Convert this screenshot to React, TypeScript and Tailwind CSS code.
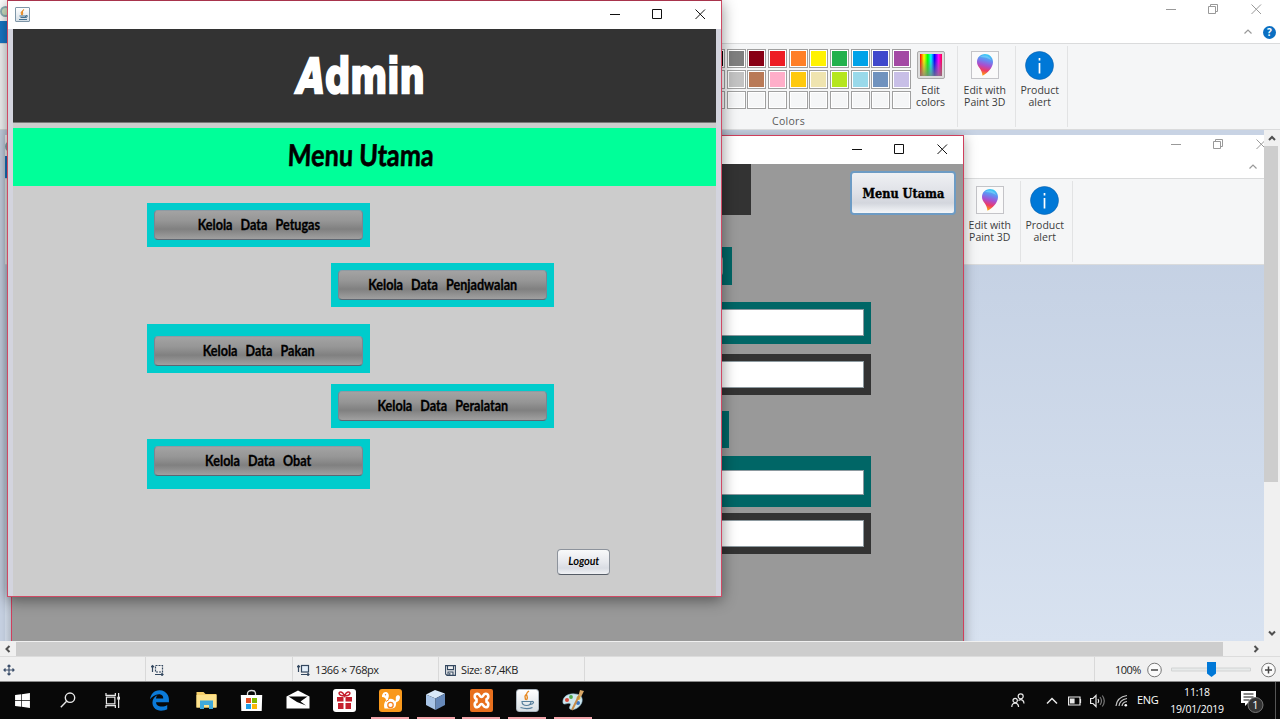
import React from "react";
import { FaEdgeLegacy, FaWindows } from "react-icons/fa";
import { SiXampp } from "react-icons/si";

const ui = "font-['Open_Sans','Noto_Sans',sans-serif]";

const topColors = ["bg-[#000]", "bg-[#7f7f7f]", "bg-[#880015]", "bg-[#ed1c24]", "bg-[#ff7f27]", "bg-[#fff200]", "bg-[#22b14c]", "bg-[#00a2e8]", "bg-[#3f48cc]", "bg-[#a349a4]"];
const lowColors = ["bg-[#fff]", "bg-[#c3c3c3]", "bg-[#b97a57]", "bg-[#ffaec9]", "bg-[#ffc90e]", "bg-[#efe4b0]", "bg-[#b5e61d]", "bg-[#99d9ea]", "bg-[#7092be]", "bg-[#c8bfe7]"];
const emptyColors = Array<string>(10).fill("bg-[#f5f6f7]");

function Swatches() {
  return (
    <div className="flex flex-col gap-[2px] pt-[5px]">
      {[topColors, lowColors, emptyColors].map((row, r) => (
        <div key={r} className="flex gap-[1.7px]">
          {row.map((c, i) => (
            <div key={i} className="h-[18.8px] w-[19px] border border-[#a0a0a0] bg-white p-px">
              <div className={`size-full ${c}`} />
            </div>
          ))}
        </div>
      ))}
    </div>
  );
}

function WinButtons({ color, thin }: { color: string; thin?: boolean }) {
  return (
    <svg width="108" height="16" viewBox="0 0 108 16" fill="none" stroke={color} strokeWidth="1">
      <path d="M6 8.500h10" />
      {thin ? <path d="M48.500 5.500h7v7h-7zM50.500 5.500v-2h7v7h-2" /> : <path d="M48.500 3.500h9v9h-9z" />}
      <path d="M91.500 3.500l9.500 9.500M101 3.500L91.500 13" />
    </svg>
  );
}

function Drop() {
  return (
    <div className="grid size-[28px] place-items-center border border-[#c4c4c8] bg-[#fafafa]">
      <svg width="18" height="24" viewBox="0 0 18 24">
        <defs>
          <linearGradient id="drop" x1="0.6" y1="0" x2="0.4" y2="1">
            <stop offset="0" stopColor="#35d0f5" />
            <stop offset=".3" stopColor="#6a86f0" />
            <stop offset=".52" stopColor="#a94fcf" />
            <stop offset=".75" stopColor="#ee3b66" />
            <stop offset="1" stopColor="#ffb000" />
          </linearGradient>
        </defs>
        <path d="M9 1C4 1 1 4.700 1 9c0 5 5 6.500 5.500 13.800C11 20.500 17 15 17 9c0-4.500-3.500-8-8-8z" fill="url(#drop)" />
        <path d="M4 4c4-3 10-1 11 3-3-2-7-3-11-3z" fill="#7fe0ff" opacity=".5" />
      </svg>
    </div>
  );
}

function Tool({ icon, a, b, w }: { icon: React.ReactNode; a: string; b: string; w: string }) {
  return (
    <div className={`flex h-[81px] flex-col items-center border-r border-[#e2e3e4] pt-[5px] ${w}`}>
      <div className="h-[33px]">{icon}</div>
      <div className="whitespace-nowrap text-center text-[10.5px] leading-[12px] text-[#3c3c3c]">
        {a}
        <br />
        {b}
      </div>
    </div>
  );
}

function PaintTop({ help }: { help?: boolean }) {
  return (
    <div className={`flex h-[130px] w-[1280px] shrink-0 flex-col bg-white ${ui}`}>
      <div className="flex h-[21px] items-start justify-between pr-[12px]">
        <div className="mt-[6px] size-[11px] rounded-full border-2 border-[#8fb2b8] bg-[#cfe4c4]" />
        <div className="pt-[1px]">
          <WinButtons color="#999" thin />
        </div>
      </div>
      <div className="flex h-[22px] items-center justify-between pr-[4px]">
        <div className="h-full w-[60px] bg-[#1979ca]" />
        <div className="flex items-center gap-[10px]">
          <svg width="10" height="8" viewBox="0 0 10 8" fill="none" stroke="#999" strokeWidth="1.200">
            <path d="M1.500 5.500L5 2l3.500 3.500" />
          </svg>
          <div className="grid size-[13px] place-items-center">
            {help && <div className="grid size-[13px] place-items-center rounded-full bg-[#0b6fc2] text-[10px] font-bold leading-none text-white">?</div>}
          </div>
        </div>
      </div>
      <div className="flex h-[87px] items-start border-y border-[#dadbdc] bg-[#f5f6f7]">
        <div className="mt-[2px] flex h-[81px] w-[958px] justify-end border-r border-[#e2e3e4] pr-[7px]">
          <div className="-mt-[2px] flex w-[205px] flex-col">
            <Swatches />
            <div className="mr-[40px] mt-[6px] text-center text-[10.5px] leading-[12px] tracking-[0.300px] text-[#5a5a5a]">Colors</div>
          </div>
          <div className="flex w-[39px] flex-col items-center pt-[5px]">
            <div className="size-[28px] rounded-[2px] border border-[#aaa] bg-[#ddd] p-[2px]">
              <div className="size-full bg-[linear-gradient(to_bottom,transparent_20%,#808080cc),linear-gradient(to_right,#f00,#ff0_18%,#0f0_35%,#0ff_50%,#00f_66%,#f0f_84%,#f04)]" />
            </div>
            <div className="mt-[5px] text-center text-[10.5px] leading-[12px] tracking-[-0.100px] text-[#3c3c3c]">
              Edit
              <br />
              colors
            </div>
          </div>
        </div>
        <div className="mt-[2px] flex">
          <Tool w="w-[57.500px] pr-[3px]" icon={<Drop />} a="Edit with" b="Paint 3D" />
          <Tool
            w="w-[52.500px] pr-[3px]"
            a="Product"
            b="alert"
            icon={
              <svg width="29" height="29" viewBox="0 0 29 29">
                <circle cx="14.500" cy="14.500" r="14" fill="#0078d7" stroke="#0c62ac" strokeWidth=".6" />
                <path d="M14.500 12v10.500M14.500 7v2.500" stroke="#fff" strokeWidth="1.700" />
              </svg>
            }
          />
        </div>
      </div>
    </div>
  );
}

function JavaIcon() {
  return (
    <div className="-mt-px grid size-[15px] place-items-center rounded-[1px] border border-[#7f96a8] bg-linear-to-b from-white to-[#d5dee6]">
      <svg width="12" height="12" viewBox="0 0 12 12" fill="none">
        <path d="M7 0.500C3 3 7.500 3.500 5 6M5 2.500C3 4 5 4.500 4.500 6" stroke="#e78a22" strokeWidth="1.100" />
        <path d="M2.500 7h6v1.500h-5M9 6.500c2-.5 1.500 2-1 2M2 10.500h8" stroke="#45708f" strokeWidth="1.100" />
      </svg>
    </div>
  );
}

function Field({ outer, inner }: { outer: string; inner: string }) {
  return (
    <div className={`w-[859px] pr-[7px] ${outer}`}>
      <div className={`border border-[#8d9aa0] bg-white ${inner}`} />
    </div>
  );
}

function BackWindow() {
  return (
    <div className="absolute left-[11px] top-[5px] flex h-[520px] w-[953px] flex-col border border-[#cf3f5c] bg-[#999] shadow-[0_2px_12px_rgba(0,0,0,0.35)]">
      <div className="flex h-[28px] shrink-0 items-center justify-end bg-white pb-[2px] pr-[9px]">
        <WinButtons color="#111" />
      </div>
      <div className="flex h-[83px] shrink-0 items-start justify-between pr-[7px]">
        <div className="h-[51px] w-[739px] bg-[#333]" />
        <div className="mt-[7px] grid h-[44px] w-[106px] place-items-center rounded-[4px] border-2 border-[#6d9bc4] bg-[linear-gradient(#eff0f3,#dfe1e7_50%,#d3d6dd_75%,#f4f6f9)] pt-[2px]">
          <span className="inline-block scale-x-[0.940] whitespace-nowrap font-['DejaVu_Serif',serif] text-[12px] font-bold text-black [-webkit-text-stroke:0.400px_black]">Menu Utama</span>
        </div>
      </div>
      <div className="h-[38px] w-[720px] shrink-0 bg-[#006666] py-[9px] pr-[9px]">
        <div className="h-full rounded bg-[#999]" />
      </div>
      <Field outer="mt-[17px] h-[42px] shrink-0 bg-[#006666] pt-[7px]" inner="h-[27px]" />
      <Field outer="mt-[10px] h-[41px] shrink-0 bg-[#333] pt-[7px]" inner="h-[27px]" />
      <div className="mt-[16px] h-[37px] w-[717px] shrink-0 bg-[#006666]" />
      <Field outer="mt-[8px] h-[51px] shrink-0 bg-[#006666] pt-[14px]" inner="h-[25px]" />
      <Field outer="mt-[6px] h-[41px] shrink-0 bg-[#333] pt-[7px]" inner="h-[27px]" />
    </div>
  );
}

function MenuItem({ label, panel }: { label: string; panel: string }) {
  return (
    <div className={`w-[223px] shrink-0 bg-[#00cccc] px-[7px] ${panel}`}>
      <div className="grid h-[30px] place-items-center rounded-[4px] border border-b-[#5c6672] border-l-[#798692] border-r-[#798692] border-t-[#8f9aa3] bg-[linear-gradient(#a3a3a3,#969696_35%,#808080_65%,#a0a0a0)] pb-[2px]">
        <span className="inline-block scale-x-[0.840] whitespace-nowrap font-['Lato','Open_Sans',sans-serif] text-[15px] font-bold leading-none text-black [-webkit-text-stroke:0.300px_black] [word-spacing:6px]">{label}</span>
      </div>
    </div>
  );
}

function AdminWindow() {
  return (
    <div className="absolute left-[7px] top-0 flex h-[597px] w-[715px] flex-col border border-[#cf4a64] border-t-[#a8344c] bg-white shadow-[0_3px_14px_rgba(0,0,0,0.45)]">
      <div className="flex h-[28px] shrink-0 items-center justify-between pl-[7px] pr-[9px]">
        <JavaIcon />
        <div className="pb-[2px]">
          <WinButtons color="#111" />
        </div>
      </div>
      <div className="flex min-h-0 flex-1 bg-[#d3d4de] pl-[5px] pr-[5px]">
        <div className="flex w-[703px] flex-col bg-[#ccc]">
          <div className="grid h-[94px] shrink-0 place-items-center border-b border-[#777] bg-[#333]">
            <span className="inline-block -translate-x-[3px] scale-x-[0.740] whitespace-nowrap font-['DejaVu_Sans',sans-serif] text-[48px] font-bold leading-none text-white [-webkit-text-stroke:2.500px_white]">
              <span className="inline-block -skew-x-12">A</span>dmin
            </span>
          </div>
          <div className="mt-[5px] grid h-[58px] shrink-0 place-items-center bg-[#00ff99] pb-[6px]">
            <span className="inline-block -translate-x-[4px] -skew-x-3 scale-x-[0.840] whitespace-nowrap font-['Lato','Open_Sans',sans-serif] text-[30px] font-bold leading-none text-black [-webkit-text-stroke:0.600px_black]">Menu Utama</span>
          </div>
          <div className="flex flex-col pl-[134px] pt-[17px]">
            <MenuItem label="Kelola Data Petugas" panel="h-[44px] pt-[7px]" />
            <MenuItem label="Kelola Data Penjadwalan" panel="ml-[184px] mt-[16px] h-[44px] pt-[7px]" />
            <MenuItem label="Kelola Data Pakan" panel="mt-[17px] h-[49px] pt-[12px]" />
            <MenuItem label="Kelola Data Peralatan" panel="ml-[184px] mt-[11px] h-[44px] pt-[7px]" />
            <MenuItem label="Kelola Data Obat" panel="mt-[11px] h-[50px] pt-[7px]" />
          </div>
          <div className="ml-[544px] mt-[60px] grid h-[26px] w-[53px] place-items-center rounded-[4px] border border-[#8d939c] border-b-[#555c66] bg-[linear-gradient(#f8f9fa,#e6e8ed_50%,#d9dce3_75%,#f0f2f5)] pb-[2px]">
            <span className="inline-block -skew-x-6 scale-x-[0.860] font-['Lato',sans-serif] text-[11.5px] font-bold leading-none text-black">Logout</span>
          </div>
        </div>
      </div>
    </div>
  );
}

function Arrow({ d }: { d: string }) {
  return (
    <svg width="16" height="16" viewBox="0 0 16 16" fill="none" stroke="#505050" strokeWidth="2" className="shrink-0">
      <path d={d} />
    </svg>
  );
}

function StatusBar() {
  const cell = "flex h-full items-center border-r border-[#d9d9d9] pt-[2px]";
  return (
    <div className={`flex h-[25px] shrink-0 items-center border-b border-[#8a8a8a] bg-[#f0f0f0] text-[11px] text-[#222] ${ui}`}>
      <div className={`${cell} w-[146px] pl-[3px]`}>
        <svg width="12" height="12" viewBox="0 0 12 12" fill="none" stroke="#3c4f6b" strokeWidth="1.200">
          <path d="M6 1v10M1 6h10M4.500 2.500L6 1l1.500 1.500M4.500 9.500L6 11l1.500-1.500M2.500 4.500L1 6l1.500 1.500M9.500 4.500L11 6 9.500 7.500" />
        </svg>
      </div>
      <div className={`${cell} w-[147px] pl-[5px]`}>
        <svg width="13" height="12" viewBox="0 0 13 12" fill="none" stroke="#33475f" strokeWidth="1.200">
          <path d="M1.500 8V1.500M0 3l1.500-1.500L3 3M4 10.500h8M10.500 9l1.500 1.500L10.500 12" />
          <rect x="4.500" y="1.500" width="7" height="6.500" strokeDasharray="2 1" />
        </svg>
      </div>
      <div className={`${cell} w-[146px] pl-[4px]`}>
        <svg width="13" height="12" viewBox="0 0 13 12" fill="none" stroke="#33475f" strokeWidth="1.200">
          <path d="M1.500 8V1.500M0 3l1.500-1.500L3 3M4 10.500h8M10.500 9l1.500 1.500L10.500 12" />
          <rect x="4.500" y="1.500" width="7" height="6.500" fill="#e4effa" />
        </svg>
        <span className="ml-[5px] tracking-[-0.400px]">1366 × 768px</span>
      </div>
      <div className={`${cell} w-[146px] pl-[6px]`}>
        <svg width="11" height="11" viewBox="0 0 11 11" fill="none" stroke="#33475f" strokeWidth="1.100">
          <path d="M.6.6h9.800v9.800H2L.6 9zM2.500.6v4h6v-4M3 10.400V7h5v3.400M4.800 8v2" />
        </svg>
        <span className="ml-[5px] tracking-[-0.380px]">Size: 87,4KB</span>
      </div>
      <div className={`${cell} flex-1`} />
      <div className="flex h-full w-[185px] items-center pl-[20px] pt-[2px]">
        <span className="w-[32px] tracking-[-0.500px]">100%</span>
        <svg width="133" height="20" viewBox="0 0 133 20" fill="none">
          <circle cx="7.500" cy="10" r="6.800" fill="#fafafa" stroke="#777" />
          <path d="M4 10h7" stroke="#444" strokeWidth="1.500" />
          <path d="M24.500 8h79v3h-79z" fill="#e7eaea" stroke="#d2d4d4" />
          <path d="M60 2h9v11.500L64.500 17 60 13.500z" fill="#0078d7" />
          <circle cx="121.500" cy="10" r="6.800" fill="#fafafa" stroke="#777" />
          <path d="M118 10h7M121.500 6.500v7" stroke="#444" strokeWidth="1.500" />
        </svg>
      </div>
    </div>
  );
}

function Task({ children, on, w = "w-[46px]" }: { children: React.ReactNode; on?: boolean; w?: string }) {
  return (
    <div className={`flex h-full shrink-0 flex-col items-center ${w}`}>
      <div className="grid min-h-0 w-full flex-1 place-items-center pt-[1px]">{children}</div>
      <div className={`h-[2px] w-[38px] ${on ? "bg-[#f2a3a9]" : ""}`} />
    </div>
  );
}

function Taskbar() {
  return (
    <div className={`flex h-[37px] shrink-0 bg-[#080808] text-white ${ui}`}>
      <Task w="w-[45px]"><FaWindows size={17} /></Task>
      <Task w="w-[46px]">
        <svg width="16" height="16" viewBox="0 0 16 16" fill="none" stroke="#e8e8e8" strokeWidth="1.400"><circle cx="10" cy="5.700" r="4.700" /><path d="M6.600 9.200L.8 15.200" /></svg>
      </Task>
      <Task w="w-[43px]">
        <svg width="16" height="15" viewBox="0 0 17 16" fill="none" stroke="#e8e8e8" strokeWidth="1.300"><path d="M1 0v2.500h10V0M1 16v-2.500h10V16M1.500 4.500h9v7h-9zM14.500 0v16" /><path d="M13 4h3v3h-3z" fill="#e8e8e8" stroke="none" /></svg>
      </Task>
      <Task w="w-[51px]"><FaEdgeLegacy size={21} color="#0b7ad8" /></Task>
      <Task w="w-[43px]">
        <svg width="21" height="18" viewBox="0 0 21 18"><path d="M.5 1h7l2 2h11v13.500H.5z" fill="#f6cf6a" /><path d="M.5 4h20v12.500H.5z" fill="#fde28d" /><path d="M4 9.500h13V18h-4v-4H8v4H4z" fill="#3fa9dc" /></svg>
      </Task>
      <Task w="w-[47px]">
        <svg width="23" height="23" viewBox="0 0 23 23"><path d="M7.500 7V4.500c0-4 8-4 8 0V7" fill="none" stroke="#ddd" strokeWidth="1.300" /><path d="M.8 6h21.400l-.5 16H1.300z" fill="#fff" /><path d="M6 9h5v5H6z" fill="#e74f25" /><path d="M12 9h5v5h-5z" fill="#7eb900" /><path d="M6 15h5v5H6z" fill="#1f9fe8" /><path d="M12 15h5v5h-5z" fill="#fbb70a" /></svg>
      </Task>
      <Task>
        <svg width="24" height="19" viewBox="0 0 24 19" className="-mt-[2px]"><path d="M.5 6.500L12 .5l11.500 6V18.500H.5z" fill="#fff" /><path d="M2.500 6.500h19l-7 5 5.500 4-9-3.500z" fill="#080808" /></svg>
      </Task>
      <Task>
        <svg width="23" height="23" viewBox="0 0 23 23"><rect width="23" height="23" rx="3" fill="#fff" /><path d="M4 8h6.500v4.500H4zM12.500 8H19v4.500h-6.500zM5 14h5.500v6H5zM12.500 14H18v6h-5.500z" fill="#c51f2d" /><path d="M11.500 7C5 7 5 2.500 8 3c2 .3 3.500 4 3.500 4s1.500-3.700 3.500-4c3-.5 3 4-3.500 4z" fill="none" stroke="#c51f2d" strokeWidth="1.500" /></svg>
      </Task>
      <Task on>
        <svg width="23" height="23" viewBox="0 0 23 23"><rect width="23" height="23" rx="3" fill="#f9991c" /><path d="M3 6.500C4 2.500 8 2 9.500 5c1 2.500-.5 4-.5 5.500 3-1.500 6-.5 7 2 2-1.500-.5-4 2-6 3-1 3.500 2 2.500 4-.8 2-2.500 2.500-3.500 3 .5 3-1 6-4 6H5.500c-1-3-.5-6 1.500-8C7 9.500 5.500 8 3 8z" fill="#fff" /><circle cx="11.500" cy="16" r="2.700" fill="none" stroke="#f58220" strokeWidth="1.300" /><circle cx="6.500" cy="5.800" r=".7" fill="#f58220" /><path d="M7 12.500l3-2" stroke="#f58220" /></svg>
      </Task>
      <Task w="w-[45px]" on>
        <svg width="21" height="22" viewBox="0 0 21 22"><path d="M1 5.500L10 1l10 3.500-9.500 5z" fill="#d8e8f8" /><path d="M1 5.500l9.500 4V21L1 16z" fill="#a8c4e6" /><path d="M10.500 9.500L20 4.500V16l-9.500 5z" fill="#6688b8" /></svg>
      </Task>
      <Task on>
        <div className="grid size-[23px] place-items-center rounded-[2px] bg-[#e8701e]">
          <svg width="19" height="19" viewBox="0 0 19 19" fill="none" stroke="#fff" strokeWidth="2.600" strokeLinejoin="round">
            <path d="M5.300 2.800C8 2.800 7.500 6 9.500 6s1.500-3.200 4.200-3.200c3.300 0 3.300 4.700.8 5.200v3c2.500.5 2.500 5.200-.8 5.200-2.700 0-2.200-3.200-4.200-3.200s-1.500 3.200-4.200 3.200c-3.300 0-3.300-4.700-.8-5.200V8C2 7.500 2 2.800 5.300 2.800z" />
          </svg>
        </div>
      </Task>
      <Task on>
        <div className="grid size-[23px] place-items-center rounded-[3px] border border-[#aab4bc] bg-linear-to-b from-white to-[#d8dfe4]">
          <svg width="19" height="20" viewBox="0 0 19 20" fill="none"><path d="M11 1C5 5 12 6 8.500 10M8 4.500C5.500 7 8 8 7.500 10" stroke="#e78a22" strokeWidth="1.400" /><path d="M4 11.500h9c0 3-2 4-4.500 4S4 14.500 4 11.500zM13.500 11.500c3-.5 2.500 2.500-1 3M2.500 17.500c4 1.300 9 1.300 12 0" stroke="#587f9c" strokeWidth="1.200" /></svg>
        </div>
      </Task>
      <Task on>
        <svg width="23" height="22" viewBox="0 0 23 22"><path d="M1 14C0 8 6 4 13 5c6 0 8 4 7 8-2 6-9 9-12 7-2-2 2-4 0-5.500-2-1-6 2-7-.5z" fill="#cfe6ee" stroke="#8fb9cc" strokeWidth=".6" /><circle cx="5" cy="11" r="2" fill="#d94b3a" /><circle cx="9" cy="8" r="1.900" fill="#4ea94a" /><circle cx="16.500" cy="9" r="2" fill="#e2b831" /><circle cx="16" cy="14" r="2" fill="#3a76c4" /><path d="M10 21L17.500 6" stroke="#c58a48" strokeWidth="2" /><path d="M16.500 6.500L18 1l4 1-3 6z" fill="#d9a765" /></svg>
      </Task>
      <div className="flex-1" />
      <div className="flex h-full items-center">
        <svg width="14" height="15" viewBox="0 0 14 15" fill="none" stroke="#e8e8e8" strokeWidth="1.200" className="mr-[21px]"><circle cx="9.700" cy="3.300" r="2.500" /><circle cx="4.200" cy="7.500" r="2.200" /><path d="M.8 14c0-5 6.500-5 6.800 0M7.500 7.500c3-2 5.500 0 5.500 3" /></svg>
        <svg width="12" height="8" viewBox="0 0 12 8" fill="none" stroke="#e8e8e8" strokeWidth="1.500" className="mr-[10px]"><path d="M1 6.500L6 1.500l5 5" /></svg>
        <svg width="14" height="10" viewBox="0 0 14 10" fill="none" stroke="#e8e8e8" strokeWidth="1.200" className="mr-[8px]"><path d="M.6 1h11.400v8H.6zM12.500 3v4" /><path d="M2.500 3H6v4H2.500z" fill="#e8e8e8" /></svg>
        <svg width="15" height="14" viewBox="0 0 15 14" fill="none" stroke="#e8e8e8" strokeWidth="1.200" className="mr-[10px]"><path d="M.6 4.500H3l3-3v11l-3-3H.6zM8 5q1.500 2 0 4" /><path d="M10 3q3 4 0 8M12.300 1.500q4 5.500 0 11" stroke="#777" /></svg>
        <svg width="13" height="13" viewBox="0 0 13 13" fill="none" stroke="#c4c4c4" strokeWidth="1.200" className="mr-[9px]"><path d="M1 12Q2 3 12 1.500M4 12Q4.500 6 12 4.500M7 12q.5-4 5-4.500" /><circle cx="10.800" cy="11.200" r="1.300" fill="#fff" stroke="none" /></svg>
        <span className="w-[22px] text-[11px] tracking-[-0.300px]">ENG</span>
        <div className="ml-[8px] w-[60px] whitespace-nowrap text-center text-[10.5px] leading-[17px] tracking-[-0.200px]">
          11:18
          <br />
          19/01/2019
        </div>
        <svg width="27" height="25" viewBox="0 0 27 25" className="ml-[13px] mr-[1px]"><path d="M1 3h15v12H8l-3 3v-3H1z" fill="#fff" /><path d="M3.500 6h10M3.500 9h10M3.500 12h6" stroke="#111" strokeWidth="1.200" /><circle cx="15.500" cy="17" r="7.500" fill="#333" stroke="#777" /><text x="15.500" y="21" textAnchor="middle" fontSize="11" fill="#fff" fontFamily="Open Sans">1</text></svg>
        <div className="ml-[7px] mr-[4px] h-full w-px bg-[#555]" />
      </div>
    </div>
  );
}

export default function App() {
  return (
    <div className="relative flex h-[719px] w-[1280px] flex-col overflow-hidden bg-white">
      <PaintTop help />
      <div className="flex h-[511px] shrink-0">
        <div className="relative w-[1264px] overflow-hidden bg-[#c8d3e4] pl-[5px] pt-[5px]">
          <div className="flex h-[506px] w-[1280px] flex-col bg-linear-to-b from-[#bfcce0] to-[#d8e2f0]">
            <PaintTop />
          </div>
          <BackWindow />
        </div>
        <div className="flex w-[16px] flex-col justify-between bg-[#f0f0f0]">
          <div>
            <Arrow d="M5 10l3-3 3 3" />
            <div className="h-[336px] w-[14px] bg-[#cdcdcd]" />
          </div>
          <Arrow d="M5 6.500l3 3 3-3" />
        </div>
      </div>
      <div className="flex h-[16px] shrink-0 items-center border-b border-[#dcdcdc] bg-[#f0f0f0]">
        <Arrow d="M9.500 5l-3 3 3 3" />
        <div className="h-[14px] w-[1207px] bg-[#cdcdcd]" />
        <div className="ml-[25px]">
          <Arrow d="M6.500 5l3 3-3 3" />
        </div>
      </div>
      <StatusBar />
      <Taskbar />
      <AdminWindow />
    </div>
  );
}
